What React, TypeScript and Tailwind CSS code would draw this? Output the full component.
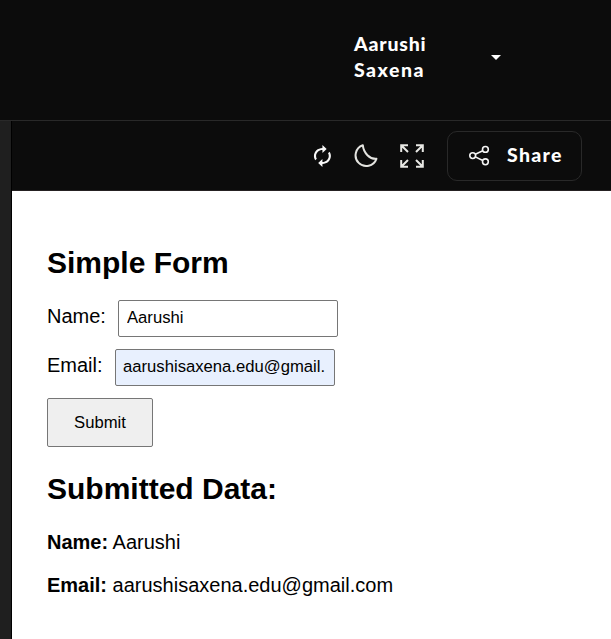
import React from "react";

function RefreshIcon() {
  return (
    <svg width="24" height="24" viewBox="0 0 24 24" fill="#f8f8f8">
      <g transform="translate(-0.3 0) scale(1.06 1)">
        <path d="M12 6v3l4-4-4-4v3c-4.42 0-8 3.58-8 8 0 1.57.46 3.03 1.24 4.26L6.7 14.8A5.87 5.87 0 0 1 6 12c0-3.31 2.69-6 6-6zm6.76 1.74L17.3 9.2c.44.84.7 1.79.7 2.8 0 3.31-2.69 6-6 6v-3l-4 4 4 4v-3c4.42 0 8-3.58 8-8 0-1.57-.46-3.03-1.24-4.26z" />
      </g>
    </svg>
  );
}

function MoonIcon() {
  return (
    <svg width="24" height="24" viewBox="0 0 24 24" fill="none" stroke="#e4e4e0" strokeWidth="2" strokeLinejoin="round">
      <path d="M8.8 1.2A10.7 10.7 0 1 0 22.4 14.8C15.8 15.4 9.6 9.2 8.8 1.2Z" />
    </svg>
  );
}

function ExpandIcon() {
  return (
    <svg width="24" height="24" viewBox="0 0 24 24" fill="none" stroke="#e8e8e4" strokeWidth="2">
      <path d="M8 1.2H1.2V8M1.2 1.2L8 8M16 1.2H22.8V8M22.8 1.2L16 8M8 22.8H1.2V16M1.2 22.8L8 16M16 22.8H22.8V16M22.8 22.8L16 16" />
    </svg>
  );
}

function ShareIcon() {
  return (
    <svg width="22" height="22" viewBox="0 0 22 22" fill="none" stroke="#f4f4f4" strokeWidth="1.6">
      <circle cx="4.7" cy="10.6" r="2.9" />
      <circle cx="17.4" cy="4.4" r="2.9" />
      <circle cx="17.4" cy="16.8" r="2.9" />
      <path d="M7.3 9.3L14.8 5.7M7.3 11.9L14.8 15.5" />
    </svg>
  );
}

export default function App() {
  return (
    <div className="flex h-[639px] w-[611px] flex-col overflow-hidden bg-white font-['Liberation_Sans',Arial,sans-serif] text-black">
      <header className="flex h-[121px] shrink-0 border-b border-[#292929] bg-[#0c0c0c] pt-[31px] pl-[354px] text-white">
        <div className="w-[137px] font-['Lato',sans-serif] text-[19.5px] leading-[26px] font-black">
          <span className="block tracking-[0.8px]">Aarushi</span>
          <span className="block tracking-[1.5px]">Saxena</span>
        </div>
        <svg className="mt-6" width="10" height="5" viewBox="0 0 10 5" fill="white">
          <path d="M0 0H10L5 5Z" />
        </svg>
      </header>
      <div className="flex min-h-0 flex-1">
        <aside className="w-3 shrink-0 border-r border-black bg-[#1f1f1f]" />
        <main className="flex min-w-0 flex-1 flex-col">
          <div className="flex h-[70px] shrink-0 items-center border-b border-[#252122] bg-[#0c0c0c] pl-[298px]">
            <RefreshIcon />
            <div className="ml-5"><MoonIcon /></div>
            <div className="ml-[22px]"><ExpandIcon /></div>
            <button className="ml-[23px] flex h-[50px] w-[135px] items-center rounded-[10px] border border-[#292929] pl-5 text-white">
              <ShareIcon />
              <span className="mb-[2px] ml-[17px] font-['Lato',sans-serif] text-[19.5px] leading-6 font-black tracking-[1.3px]">Share</span>
            </button>
          </div>
          <div className="flex flex-col items-start pl-[35px] text-[20px] leading-[23px]">
            <h2 className="mt-[55px] text-[30px] leading-[34px] font-bold">Simple Form</h2>
            <div className="mt-5 flex h-[37px] items-center">
              <label className="mt-[-5px] w-[71px]">Name:</label>
              <input className="h-[37px] w-[220px] rounded-[2px] border border-[#767676] bg-white px-2 pb-[2px] text-[16.667px]" defaultValue="Aarushi" />
            </div>
            <div className="mt-3 flex h-[37px] items-center">
              <label className="mt-[-5px] w-[68px]">Email:</label>
              <input className="h-[37px] w-[220px] rounded-[2px] border border-[#767676] bg-[#e8f0fe] pr-[9px] pb-[2px] pl-[7px] text-[16.667px]" defaultValue="aarushisaxena.edu@gmail.com" />
            </div>
            <button className="mt-3 h-[49px] w-[106px] rounded-[2px] border border-[#767676] bg-[#efefef] text-[16.667px]">Submit</button>
            <h2 className="mt-[25px] text-[30px] leading-[34px] font-bold">Submitted Data:</h2>
            <p className="mt-[25px]"><strong>Name:</strong> Aarushi</p>
            <p className="mt-5"><strong>Email:</strong> aarushisaxena.edu@gmail.com</p>
          </div>
        </main>
      </div>
    </div>
  );
}
